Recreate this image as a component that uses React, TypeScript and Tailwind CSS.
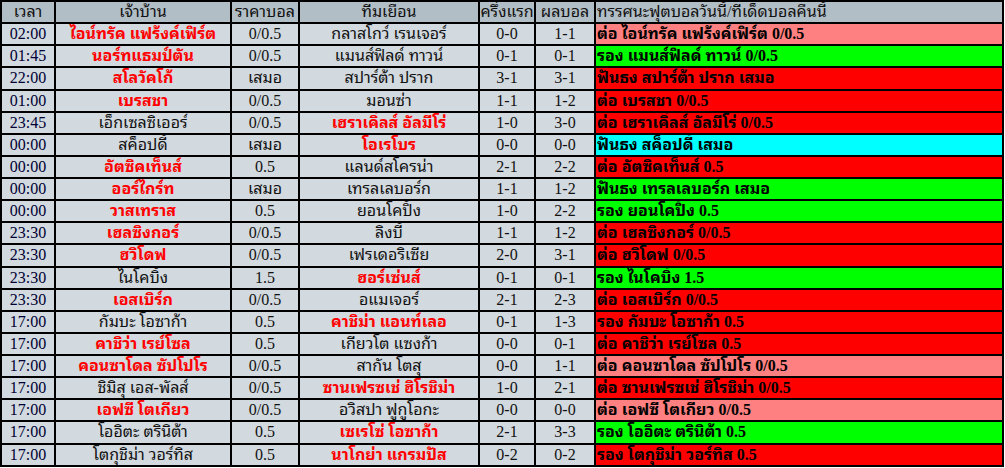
const font = { fontFamily: '"Liberation Serif", "Noto Sans Thai Looped", "Noto Serif Thai", "Noto Sans Thai", "Noto Sans", serif' }

type Row = {
  time: string
  home: string
  homeRed: boolean
  price: string
  away: string
  half: string
  full: string
  tip: string
  tone: 'pink' | 'green' | 'red' | 'cyan'
}

const rows: Row[] = [
  { time: '02:00', home: 'ไอน์ทรัค แฟร้งค์เฟิร์ต', homeRed: true, price: '0/0.5', away: 'กลาสโกว์ เรนเจอร์', half: '0-0', full: '1-1', tip: 'ต่อ ไอน์ทรัค แฟร้งค์เฟิร์ต 0/0.5', tone: 'pink' },
  { time: '01:45', home: 'นอร์ทแธมป์ตัน', homeRed: true, price: '0/0.5', away: 'แมนส์ฟิลด์ ทาวน์', half: '0-1', full: '0-1', tip: 'รอง แมนส์ฟิลด์ ทาวน์ 0/0.5', tone: 'green' },
  { time: '22:00', home: 'สโลวัคโก้', homeRed: true, price: 'เสมอ', away: 'สปาร์ต้า ปราก', half: '3-1', full: '3-1', tip: 'ฟันธง สปาร์ต้า ปราก เสมอ', tone: 'red' },
  { time: '01:00', home: 'เบรสชา', homeRed: true, price: '0/0.5', away: 'มอนซ่า', half: '1-1', full: '1-2', tip: 'ต่อ เบรสชา 0/0.5', tone: 'red' },
  { time: '23:45', home: 'เอ็กเซลซิเออร์', homeRed: false, price: '0/0.5', away: 'เฮราเคิ่ลส์ อัลมีโร่', half: '1-0', full: '3-0', tip: 'ต่อ เฮราเคิ่ลส์ อัลมีโร่ 0/0.5', tone: 'red' },
  { time: '00:00', home: 'สค็อปดี้', homeRed: false, price: 'เสมอ', away: 'โอเรโบร', half: '0-0', full: '0-0', tip: 'ฟันธง สค็อปดี้ เสมอ', tone: 'cyan' },
  { time: '00:00', home: 'อัตซิคเท็นส์', homeRed: true, price: '0.5', away: 'แลนด์สโครน่า', half: '2-1', full: '2-2', tip: 'ต่อ อัตซิคเท็นส์ 0.5', tone: 'red' },
  { time: '00:00', home: 'ออร์ไกร์ท', homeRed: true, price: 'เสมอ', away: 'เทรลเลบอร์ก', half: '1-1', full: '1-2', tip: 'ฟันธง เทรลเลบอร์ก เสมอ', tone: 'green' },
  { time: '00:00', home: 'วาสเทราส', homeRed: true, price: '0.5', away: 'ยอนโคปิ้ง', half: '1-0', full: '2-2', tip: 'รอง ยอนโคปิ้ง 0.5', tone: 'green' },
  { time: '23:30', home: 'เฮลซิงกอร์', homeRed: true, price: '0/0.5', away: 'ลิงบี้', half: '1-1', full: '1-2', tip: 'ต่อ เฮลซิงกอร์ 0/0.5', tone: 'red' },
  { time: '23:30', home: 'ฮวิโดฟ', homeRed: true, price: '0/0.5', away: 'เฟรเดอริเซีย', half: '2-0', full: '3-1', tip: 'ต่อ ฮวิโดฟ 0/0.5', tone: 'red' },
  { time: '23:30', home: 'ไนโคบิ้ง', homeRed: false, price: '1.5', away: 'ฮอร์เซ่นส์', half: '0-1', full: '0-1', tip: 'รอง ไนโคบิ้ง 1.5', tone: 'green' },
  { time: '23:30', home: 'เอสเบิร์ก', homeRed: true, price: '0/0.5', away: 'อแมเจอร์', half: '2-1', full: '2-3', tip: 'ต่อ เอสเบิร์ก 0/0.5', tone: 'red' },
  { time: '17:00', home: 'กัมบะ โอซาก้า', homeRed: false, price: '0.5', away: 'คาชิม่า แอนท์เลอ', half: '0-1', full: '1-3', tip: 'รอง กัมบะ โอซาก้า 0.5', tone: 'red' },
  { time: '17:00', home: 'คาชิว่า เรย์โซล', homeRed: true, price: '0.5', away: 'เกียวโต แซงก้า', half: '0-0', full: '0-1', tip: 'ต่อ คาชิว่า เรย์โซล 0.5', tone: 'red' },
  { time: '17:00', home: 'คอนซาโดล ซัปโปโร', homeRed: true, price: '0/0.5', away: 'สากัน โตสุ', half: '0-0', full: '1-1', tip: 'ต่อ คอนซาโดล ซัปโปโร 0/0.5', tone: 'pink' },
  { time: '17:00', home: 'ชิมิสุ เอส-พัลส์', homeRed: false, price: '0/0.5', away: 'ซานเฟรซเช่ ฮิโรชิม่า', half: '1-0', full: '2-1', tip: 'ต่อ ซานเฟรซเช่ ฮิโรชิม่า 0/0.5', tone: 'red' },
  { time: '17:00', home: 'เอฟซี โตเกียว', homeRed: true, price: '0/0.5', away: 'อวิสปา ฟูกูโอกะ', half: '0-0', full: '0-0', tip: 'ต่อ เอฟซี โตเกียว 0/0.5', tone: 'pink' },
  { time: '17:00', home: 'โออิตะ ตรินิต้า', homeRed: false, price: '0.5', away: 'เซเรโซ่ โอซาก้า', half: '2-1', full: '3-3', tip: 'รอง โออิตะ ตรินิต้า 0.5', tone: 'green' },
  { time: '17:00', home: 'โตกุชิม่า วอร์ทิส', homeRed: false, price: '0.5', away: 'นาโกย่า แกรมปัส', half: '0-2', full: '0-2', tip: 'รอง โตกุชิม่า วอร์ทิส 0.5', tone: 'red' },
]

const toneClass = {
  pink: 'bg-[#ff8080]',
  green: 'bg-[#00ff00]',
  red: 'bg-[#ff0000]',
  cyan: 'bg-[#00ffff]',
}

// base cell, no background so tone classes don't fight it
const cell = 'h-[20.14px] flex items-center justify-center whitespace-nowrap overflow-hidden text-[16px] leading-none'
const body = `${cell} bg-[#d2d9df]`

function Team({ name, red }: { name: string; red: boolean }) {
  return (
    <div className={`${body} ${red ? 'text-[#ff0000] font-bold' : 'text-[#111]'}`}>{name}</div>
  )
}

export default function App() {
  const headers = ['เวลา', 'เจ้าบ้าน', 'ราคาบอล', 'ทีมเยือน', 'ครึ่งแรก', 'ผลบอล']

  return (
    <div className="w-[1005px] h-[468px] bg-white" style={font}>
      <div className="grid grid-cols-[52px_174px_66px_178px_54px_58px_406px] gap-[2px] p-[2px] bg-black w-[1004px]">
        {/* Header */}
        {headers.map((h) => (
          <div key={h} className={`${cell} bg-[#b1bec6] text-[#111]`}>{h}</div>
        ))}
        <div className={`${cell} bg-[#b1bec6] text-[#111] justify-start pl-[1px]`}>
          ทรรศนะฟุตบอลวันนี้/ทีเด็ดบอลคืนนี้
        </div>

        {/* Rows */}
        {rows.map((r, i) => (
          <div key={i} className="contents">
            <div className={`${body} text-[#000033]`}>{r.time}</div>
            <Team name={r.home} red={r.homeRed} />
            <div className={`${body} text-[#111]`}>{r.price}</div>
            <Team name={r.away} red={!r.homeRed} />
            <div className={`${body} text-[#111]`}>{r.half}</div>
            <div className={`${body} text-[#111]`}>{r.full}</div>
            <div className={`${cell} ${toneClass[r.tone]} justify-start pl-[1px] font-bold text-black`}>{r.tip}</div>
          </div>
        ))}
      </div>
    </div>
  )
}
